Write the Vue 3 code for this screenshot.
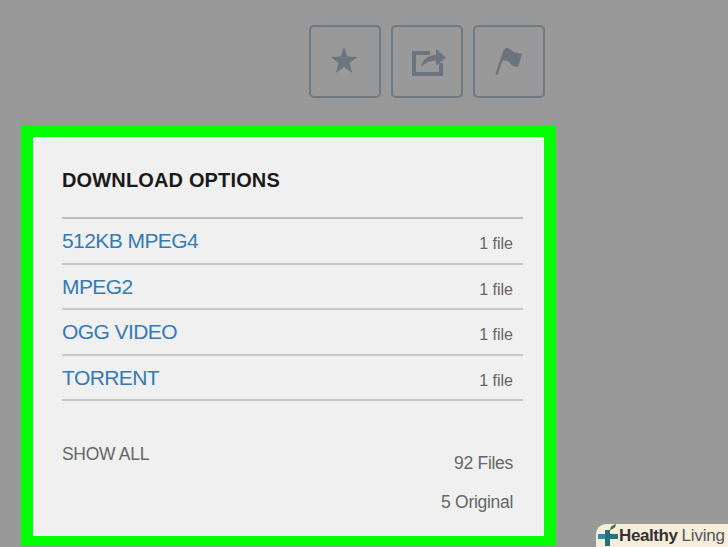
<template>
  <div class="page">
    <div class="actions">
      <button class="act">
        <svg width="28" height="27" viewBox="1 1 28 27"><path d="M14 0l3.300 9.600 10.200.3-8.100 6.200 2.900 9.900-8.300-5.900-8.300 5.900 2.900-9.900L.5 9.900l10.200-.3z" fill="#6b757f" /></svg>
      </button>
      <button class="act">
        <svg width="40" height="28" viewBox="-4 0 40 28">
          <path d="M19 5H3v21h27V15" fill="none" stroke="#6b757f" stroke-width="4" />
          <path d="M10 19c1-7 7-12 15-12V1l10 8.500-10 8v-5c-6 0-10 2-15 6.500z" fill="#6b757f" />
        </svg>
      </button>
      <button class="act">
        <svg width="28" height="28" viewBox="0 1 28 28">
          <path d="M1.500 27.500L10 3" stroke="#6b757f" stroke-width="2.400" fill="none" />
          <path d="M10 1c4-1 6 2 9 4l8 2-4 13c-3 0-6-1-8-4-2-2-5-3-8-2z" fill="#6b757f" />
        </svg>
      </button>
    </div>

    <section class="panel">
      <h2>DOWNLOAD OPTIONS</h2>
      <ul class="list">
        <li v-for="row in rows" :key="row.name" :style="{ height: row.h + 'px' }">
          <a>{{ row.name }}</a>
          <span>1 file</span>
        </li>
      </ul>
      <div class="foot">
        <a>SHOW ALL</a>
        <div class="counts">
          <span>92 Files</span>
          <span>5 Original</span>
        </div>
      </div>
    </section>

    <div class="badge">
      <svg width="21" height="22" viewBox="0 0 21 22">
        <path d="M7 6h5v4h8v5h-8v7H7v-7H0v-5h7z" fill="#1f7480" />
        <path d="M0 10h7v5H0z" fill="#2f8ea0" />
        <path d="M12 6c0-3 2-5 6-6 0 3-2 5-6 6z" fill="#3f7d3a" />
      </svg>
      <span class="hl">Healthy</span><span class="lv">Living</span>
    </div>
  </div>
</template>

<script setup>
const rows = [
  { name: "512KB MPEG4", h: 46 },
  { name: "MPEG2", h: 45 },
  { name: "OGG VIDEO", h: 46 },
  { name: "TORRENT", h: 45 },
];
</script>

<style>
html,
body {
  margin: 0;
  background: #999999;
}
</style>

<style scoped>
.page {
  position: relative;
  width: 728px;
  height: 547px;
  overflow: hidden;
  background: #999999;
  font-family: "Liberation Sans", Arial, sans-serif;
}
.actions {
  display: flex;
  justify-content: flex-end;
  gap: 10px;
  width: 545px;
  padding-top: 25px;
  height: 100px;
}
.act {
  box-sizing: border-box;
  width: 72px;
  height: 73px;
  display: flex;
  align-items: center;
  justify-content: center;
  padding: 0;
  background: transparent;
  border: 2px solid #6f7a84;
  border-radius: 5px;
}
.panel {
  box-sizing: border-box;
  width: 535px;
  height: 421px;
  margin-left: 21px;
  padding: 31px 21px 0 29px;
  background: #f0f0f0;
  border: 12px solid #00ff00;
  border-bottom-width: 10px;
}
h2 {
  margin: 0;
  height: 49px;
  font-size: 20px;
  line-height: 24px;
  font-weight: bold;
  letter-spacing: 0.15px;
  color: #1a1a1a;
}
.list {
  margin: 0;
  padding: 0;
  list-style: none;
  border-top: 2px solid #bdbdbd;
}
.list li {
  box-sizing: border-box;
  display: flex;
  justify-content: space-between;
  padding: 10px 10px 0 0;
  border-bottom: 2px solid #c8c8c8;
}
.list a {
  font-size: 21px;
  line-height: 24px;
  letter-spacing: -0.57px;
  color: #337ab7;
}
.list span {
  font-size: 16px;
  line-height: 24px;
  margin-top: 3px;
  color: #666666;
}
.foot {
  display: flex;
  justify-content: space-between;
  padding: 41px 10px 0 0;
}
.foot a {
  font-size: 17.5px;
  line-height: 24px;
  letter-spacing: -0.3px;
  color: #666666;
}
.counts {
  display: flex;
  flex-direction: column;
  align-items: flex-end;
  gap: 15px;
  padding-top: 9px;
  font-size: 17.5px;
  line-height: 24px;
  letter-spacing: -0.3px;
  color: #666666;
}
.badge {
  position: absolute;
  right: 0;
  bottom: 0;
  width: 132px;
  height: 23px;
  display: flex;
  align-items: center;
  background: #f6eeda;
  border-top-left-radius: 10px;
  font-size: 17px;
  white-space: nowrap;
}
.badge svg {
  margin: -2px 0 0 2px;
  flex: none;
}
.hl {
  font-weight: bold;
  color: #333333;
  letter-spacing: -0.4px;
}
.lv {
  margin-left: 4px;
  color: #555555;
  letter-spacing: -0.2px;
}
</style>
